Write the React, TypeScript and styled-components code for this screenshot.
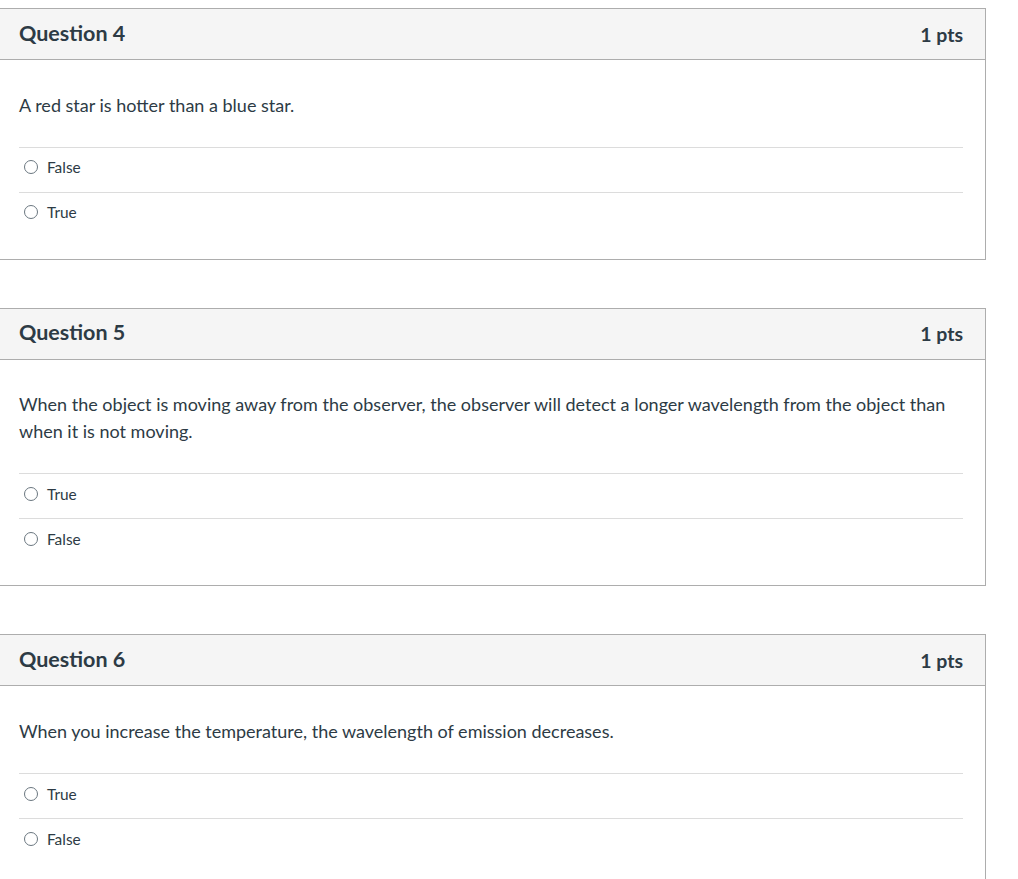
import React from "react";
import styled, { createGlobalStyle } from "styled-components";

interface Question {
  id: number;
  title: string;
  points: string;
  text: string;
  answers: string[];
}

const questions: Question[] = [
  {
    id: 4,
    title: "Question 4",
    points: "1 pts",
    text: "A red star is hotter than a blue star.",
    answers: ["False", "True"],
  },
  {
    id: 5,
    title: "Question 5",
    points: "1 pts",
    text: "When the object is moving away from the observer, the observer will detect a longer wavelength from the object than when it is not moving.",
    answers: ["True", "False"],
  },
  {
    id: 6,
    title: "Question 6",
    points: "1 pts",
    text: "When you increase the temperature, the wavelength of emission decreases.",
    answers: ["True", "False"],
  },
];

const App: React.FC = () => {
  return (
    <>
      <GlobalStyle />
      <Page>
        {questions.map((q) => (
          <Card key={q.id}>
            <Header>
              <Title>{q.title}</Title>
              <Points>{q.points}</Points>
            </Header>
            <Body>
              <QuestionText>{q.text}</QuestionText>
              <AnswerList>
                {q.answers.map((answer) => (
                  <Answer key={answer}>
                    <Radio type="radio" name={`q${q.id}`} />
                    <AnswerLabel>{answer}</AnswerLabel>
                  </Answer>
                ))}
              </AnswerList>
            </Body>
          </Card>
        ))}
      </Page>
    </>
  );
};

export default App;

const GlobalStyle = createGlobalStyle`
  body {
    margin: 0;
    background: #ffffff;
    font-family: Lato, "Liberation Sans", sans-serif;
    color: #2d3b45;
  }
`;

const Page = styled.div`
  display: flex;
  flex-direction: column;
  gap: 48px;
  padding-top: 8px;
  width: 987px;
  margin-left: -1px;
`;

const Card = styled.div`
  border: 1px solid #adadad;
  background: #ffffff;
`;

const Header = styled.div`
  display: flex;
  align-items: center;
  justify-content: space-between;
  height: 50px;
  padding: 0 22px 0 19px;
  background: #f5f5f5;
  border-bottom: 1px solid #adadad;
`;

const Title = styled.h2`
  margin: 0;
  font-size: 21.5px;
  font-weight: 700;
  color: #2d3b45;
  padding-bottom: 3px;
`;

const Points = styled.span`
  font-size: 19.5px;
  font-weight: 700;
  color: #2d3b45;
`;

const Body = styled.div`
  padding: 31.5px 22px 22px 19px;
`;

const QuestionText = styled.p`
  margin: 0 0 29px;
  font-size: 18px;
  line-height: 26.4px;
  color: #2d3b45;
`;

const AnswerList = styled.div`
  display: flex;
  flex-direction: column;
`;

const Answer = styled.label`
  display: flex;
  align-items: center;
  box-sizing: content-box;
  height: 39px;
  padding: 0 0 5px 5px;
  border-top: 1px solid #dcdcdc;
`;

const Radio = styled.input`
  appearance: none;
  width: 14px;
  height: 14px;
  margin: 0 9px 0 0;
  border: 1.5px solid #6b7780;
  border-radius: 50%;
  background: #ffffff;
  box-sizing: border-box;
`;

const AnswerLabel = styled.span`
  font-size: 15.4px;
  color: #2d3b45;
`;
